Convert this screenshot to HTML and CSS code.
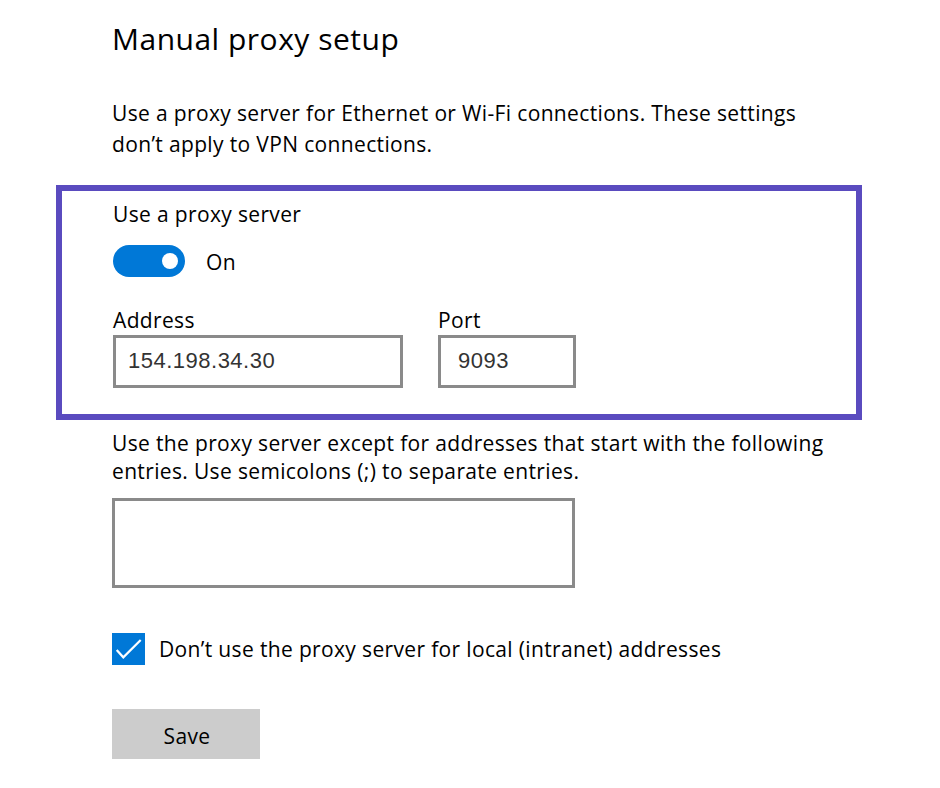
FILE: index.html
```html
<!DOCTYPE html>
<html lang="en">
<head>
<meta charset="utf-8">
<title>Manual proxy setup</title>
<link rel="stylesheet" href="styles.css">
</head>
<body>
<main class="page">
  <h1 class="title">Manual proxy setup</h1>
  <p class="intro">Use a proxy server for Ethernet or Wi-Fi connections. These settings don’t apply to VPN connections.</p>

  <section class="highlight">
    <div class="label">Use a proxy server</div>
    <div class="toggle-row">
      <span class="toggle"><span class="knob"></span></span>
      <span class="toggle-text">On</span>
    </div>
    <div class="fields">
      <div class="field">
        <div class="label">Address</div>
        <div class="input input-address">154.198.34.30</div>
      </div>
      <div class="field">
        <div class="label">Port</div>
        <div class="input input-port">9093</div>
      </div>
    </div>
  </section>

  <p class="except">Use the proxy server except for addresses that start with the following entries. Use semicolons (;) to separate entries.</p>
  <div class="textarea"></div>

  <div class="check-row">
    <span class="checkbox">
      <svg width="33" height="32" viewBox="0 0 33 32"><path d="M4.7 17 L11.3 24.3 L28.7 7" fill="none" stroke="#fff" stroke-width="2.2"/></svg>
    </span>
    <span class="check-text">Don’t use the proxy server for local (intranet) addresses</span>
  </div>

  <button class="save">Save</button>
</main>
</body>
</html>
```

FILE: styles.css
```css
html, body {
  margin: 0;
  padding: 0;
  background: #ffffff;
}

body {
  font-family: "Open Sans", "Noto Sans", sans-serif;
  color: #000000;
}

.page {
  padding: 20px 0 0 112px;
  width: 760px;
}

.title {
  margin: 0;
  font-size: 30px;
  font-weight: 400;
  line-height: 38px;
  letter-spacing: 0.5px;
}

.intro {
  margin: 40px 0 0 0;
  font-size: 21px;
  line-height: 31px;
  width: 730px;
  letter-spacing: 0.35px;
}

.highlight {
  margin: 25px 0 0 -56px;
  border: 6px solid #5a4bbf;
  padding: 8px 0 26px 51px;
  box-sizing: border-box;
  width: 806px;
}

.label {
  font-size: 21px;
  line-height: 30px;
  letter-spacing: 0.35px;
}

.toggle-row {
  display: flex;
  align-items: center;
  gap: 21px;
  margin-top: 15px;
}

.toggle {
  display: flex;
  align-items: center;
  justify-content: flex-end;
  width: 72px;
  height: 32px;
  border-radius: 16px;
  background: #0078d7;
  padding-right: 7px;
  box-sizing: border-box;
}

.knob {
  width: 16px;
  height: 16px;
  border-radius: 50%;
  background: #ffffff;
}

.toggle-text {
  font-size: 21px;
  line-height: 30px;
  padding-top: 3px;
  letter-spacing: 0.35px;
}

.fields {
  display: flex;
  gap: 35px;
  margin-top: 28px;
}

.input {
  box-sizing: border-box;
  height: 53px;
  border: 3px solid #8a8a8a;
  font-family: "Liberation Sans", Arial, sans-serif;
  font-size: 22px;
  line-height: 46px;
  color: #333333;
  padding-left: 12px;
  letter-spacing: 0.5px;
}

.input-address {
  width: 290px;
}

.input-port {
  width: 138px;
  padding-left: 17px;
}

.except {
  margin: 9px 0 0 0;
  font-size: 21px;
  line-height: 28px;
  width: 740px;
  letter-spacing: 0.35px;
}

.textarea {
  box-sizing: border-box;
  margin-top: 13px;
  width: 463px;
  height: 90px;
  border: 3px solid #8a8a8a;
}

.check-row {
  display: flex;
  align-items: center;
  gap: 14px;
  margin-top: 45px;
}

.checkbox {
  display: flex;
  width: 33px;
  height: 32px;
  background: #0078d7;
}

.check-text {
  font-size: 21px;
  line-height: 30px;
  letter-spacing: 0.35px;
}

.save {
  display: block;
  margin-top: 44px;
  width: 148px;
  height: 50px;
  border: none;
  background: #cccccc;
  font-family: "Open Sans", "Noto Sans", sans-serif;
  font-size: 21px;
  color: #000000;
  padding: 3px 0 0 2px;
  letter-spacing: 0.35px;
}
```
